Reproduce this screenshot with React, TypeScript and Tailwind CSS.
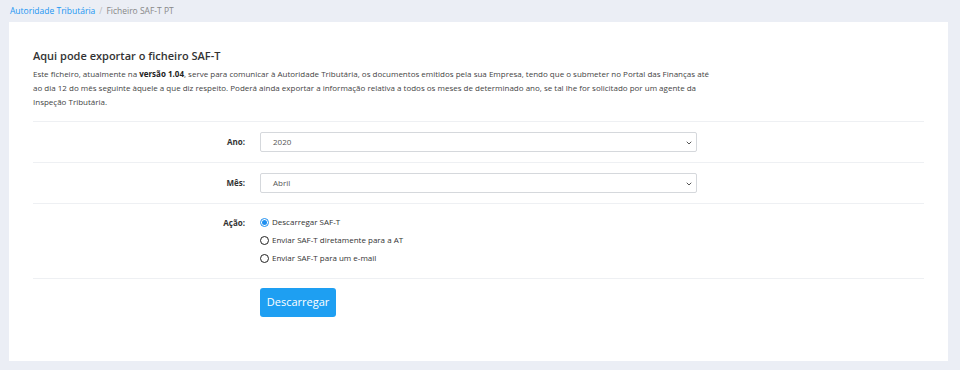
import { ChevronDown } from "lucide-react";

const font = { fontFamily: '"Open Sans", "Noto Sans", sans-serif' };

function SelectRow({ label, value }: { label: string; value: string }) {
  return (
    <div className="flex items-center h-[41px] border-b border-[#eef0f3]">
      <div className="w-[227px] pr-[15px] text-right text-[8px] font-bold text-[#333]">{label}</div>
      <div className="relative w-[437px] h-[20px] border border-[#d5d8dc] rounded-[2px] bg-white flex items-center pl-[12px]">
        <span className="text-[8px] text-[#555]">{value}</span>
        <ChevronDown className="absolute right-[3px] top-[6px] w-[8px] h-[8px] text-[#555]" strokeWidth={3} />
      </div>
    </div>
  );
}

function Radio({ label, checked }: { label: string; checked?: boolean }) {
  return (
    <div className="flex items-center gap-[3px] h-[18px]">
      <span
        className={
          checked
            ? "w-[9px] h-[9px] rounded-full border border-[#1e8ff0] bg-white flex items-center justify-center"
            : "w-[9px] h-[9px] rounded-full border-[1.5px] border-[#222] bg-white"
        }
      >
        {checked && <span className="w-[5px] h-[5px] rounded-full bg-[#1e8ff0]" />}
      </span>
      <span className="text-[8px] text-[#333]">{label}</span>
    </div>
  );
}

export default function App() {
  return (
    <div className="w-[960px] h-[370px] bg-[#ebeef5] overflow-hidden" style={font}>
      {/* Breadcrumb */}
      <div className="h-[22px] flex items-center pl-[10px] text-[8.5px] gap-[4px]">
        <span className="text-[#2196f3]">Autoridade Tributária</span>
        <span className="text-[#bbb]">/</span>
        <span className="text-[#888]">Ficheiro SAF-T PT</span>
      </div>

      <div className="ml-[9px] w-[939px] h-[339px] bg-white pt-[27px] px-[24px]">
        <h1 className="text-[11px] font-semibold text-[#333] leading-[14px]">Aqui pode exportar o ficheiro SAF-T</h1>
        <p className="mt-[4px] text-[8px] leading-[14px] text-[#444] w-[676px]">
          Este ficheiro, atualmente na <b className="text-[#222] leading-[14px]">versão 1.04</b>, serve para comunicar à Autoridade Tributária, os documentos emitidos pela sua Empresa, tendo que o submeter no Portal das Finanças até ao dia 12 do mês seguinte àquele a que diz respeito. Poderá ainda exportar a informação relativa a todos os meses de determinado ano, se tal lhe for solicitado por um agente da Inspeção Tributária.
        </p>

        <div className="mt-[12px] w-[891px] border-t border-[#eef0f3]">
          <SelectRow label="Ano:" value="2020" />
          <SelectRow label="Mês:" value="Abril" />

          <div className="flex pt-[9px] h-[75px] border-b border-[#eef0f3]">
            <div className="w-[227px] pr-[15px] text-right text-[8px] font-bold text-[#333] pt-[4px]">Ação:</div>
            <div className="flex flex-col">
              <Radio label="Descarregar SAF-T" checked />
              <Radio label="Enviar SAF-T diretamente para a AT" />
              <Radio label="Enviar SAF-T para um e-mail" />
            </div>
          </div>

          <div className="pl-[227px] pt-[9px]">
            <button className="w-[76px] h-[29px] rounded-[3px] bg-[#1e9ff2] text-white text-[11px]">Descarregar</button>
          </div>
        </div>
      </div>
    </div>
  );
}
